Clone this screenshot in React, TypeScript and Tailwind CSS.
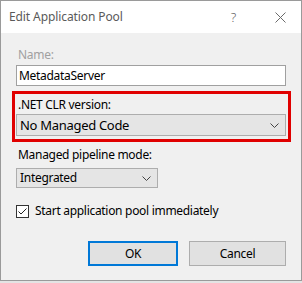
const Chevron = () => (
  <svg width="9" height="5" viewBox="0 0 9 5" className="text-[#444]">
    <polyline points="0.5,0.5 4.5,4.5 8.5,0.5" fill="none" stroke="currentColor" strokeWidth="1" />
  </svg>
)

export default function App() {
  return (
    <div className="w-[302px] h-[283px] bg-[#e4e4e4] font-['Noto_Sans',sans-serif] text-[12px] leading-[16px] tracking-[-0.3px] text-black">
      <div className="w-[302px] h-[281px] border border-[#9a9a9a] flex flex-col">
        {/* Title bar */}
        <div className="h-[32px] bg-white flex items-center pl-[8px] text-[#5a5a5a]">
          <span className="text-[12px] tracking-[-0.1px]">Edit Application Pool</span>
          <span className="ml-auto mr-[39px] text-[13px] font-light">?</span>
          <svg width="11" height="11" viewBox="0 0 11 11" className="mr-[15px]">
            <path d="M0.5 0.5 L10.5 10.5 M10.5 0.5 L0.5 10.5" stroke="#6a6a6a" strokeWidth="1" />
          </svg>
        </div>

        {/* Body */}
        <div className="flex-1 bg-[#f0f0f0] px-[15px] pt-[14px] flex flex-col">
          <div className="text-[#a0a0a0] pl-[2px]">Name:</div>
          <div className="mt-[2px] h-[21px] bg-white border border-[#a0a0a0] flex items-center pl-[2px]">
            MetadataServer
          </div>

          <div className="mt-[5px] -ml-[4px] -mr-[5px] border-[3px] border-[#e00000] pl-[1px] pr-[2px] pt-[3px] pb-[3px]">
            <div className="pl-[2px]">.NET CLR version:</div>
            <div className="mt-[1px] h-[22px] bg-[#e5e5e5] border border-[#adadad] flex items-center pl-[3px] pr-[6px]">
              <span className="text-[13px]">No Managed Code</span>
              <span className="ml-auto"><Chevron /></span>
            </div>
          </div>

          <div className="mt-[5px] pl-[2px]">Managed pipeline mode:</div>
          <div className="mt-[5px] w-[142px] h-[20px] bg-[#e5e5e5] border border-[#adadad] flex items-center pl-[3px] pr-[6px]">
            <span>Integrated</span>
            <span className="ml-auto"><Chevron /></span>
          </div>

          <div className="mt-[15px] flex items-center">
            <div className="w-[13px] h-[13px] bg-white border border-[#333] flex items-center justify-center">
              <svg width="11" height="11" viewBox="0 0 11 11">
                <polyline points="1.5,5.5 4,8 9.5,2.5" fill="none" stroke="#222" strokeWidth="1" />
              </svg>
            </div>
            <span className="ml-[6px]">Start application pool immediately</span>
          </div>

          <div className="mt-[22px] flex justify-end gap-[11px]">
            <button className="w-[90px] h-[25px] bg-[#e1e1e1] border-2 border-[#0078d7] flex items-center justify-center">
              OK
            </button>
            <button className="w-[97px] h-[25px] bg-[#e1e1e1] border border-[#adadad] flex items-center justify-center">
              Cancel
            </button>
          </div>
        </div>
      </div>
    </div>
  )
}
